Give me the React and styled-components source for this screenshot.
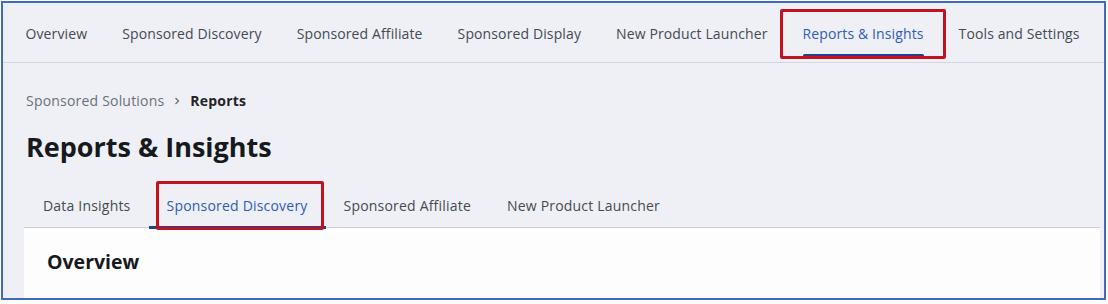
import React from "react";
import styled, { createGlobalStyle, css } from "styled-components";

const GlobalStyle = createGlobalStyle`
  html, body {
    margin: 0;
    padding: 0;
    background: #ffffff;
  }
  * {
    box-sizing: border-box;
  }
`;

const Frame = styled.div`
  margin: 1px 0 0 1px;
  width: 1105px;
  height: 299px;
  border: 2px solid #3f69bd;
  background: #eef0f5;
  font-family: "Open Sans", "Noto Sans", sans-serif;
  overflow: hidden;
  display: flex;
  flex-direction: column;
`;

const TopNav = styled.nav`
  height: 60px;
  flex: none;
  display: flex;
  align-items: stretch;
  gap: 35px;
  padding-left: 22.5px;
  border-bottom: 1px solid #d3d6dc;
`;

const highlight = css`
  &::after {
    content: "";
    position: absolute;
    border: 3px solid #c1121f;
    border-radius: 2px;
    pointer-events: none;
  }
`;

const NavItem = styled.a`
  position: relative;
  display: flex;
  align-items: center;
  padding-top: 1px;
  font-size: 14px;
  letter-spacing: 0.12px;
  color: ${p => (p.active ? "#2f5bb7" : "#454a52")};
  text-decoration: none;
  white-space: nowrap;

  ${p =>
    p.active &&
    css`
      &::before {
        content: "";
        position: absolute;
        left: 0;
        right: 0;
        bottom: 5px;
        height: 3px;
        border-radius: 2px;
        background: #263f8c;
      }
      ${highlight}
      &::after {
        left: -23px;
        right: -22px;
        top: 6px;
        bottom: 3px;
      }
    `}
`;

const Main = styled.div`
  flex: 1;
  display: flex;
  flex-direction: column;
  padding: 28px 4px 0 21px;
`;

const Breadcrumb = styled.div`
  display: flex;
  align-items: center;
  gap: 10px;
  padding-left: 2px;
  font-size: 14px;
  letter-spacing: 0.2px;
  line-height: 20px;
  color: #6a707a;
`;

const Current = styled.span`
  font-weight: 700;
  color: #1f2329;
`;

const Title = styled.h1`
  margin: 19px 0 0 2px;
  font-size: 27px;
  line-height: 34px;
  font-weight: 700;
  color: #16191d;
`;

const SubTabs = styled.div`
  margin-top: 20px;
  display: flex;
  padding-left: 1px;
  border-bottom: 1px solid #c9ccd2;
`;

const SubTab = styled.a`
  position: relative;
  height: 43px;
  padding: 0 18px;
  display: flex;
  align-items: center;
  font-size: 14px;
  letter-spacing: 0.2px;
  color: ${p => (p.active ? "#2f5bb7" : "#454a52")};
  text-decoration: none;
  white-space: nowrap;

  ${p =>
    p.active &&
    css`
      &::before {
        content: "";
        position: absolute;
        left: 0;
        right: 0;
        bottom: -2px;
        height: 3px;
        background: #263f8c;
      }
      ${highlight}
      &::after {
        left: 7px;
        right: 2px;
        top: -3px;
        bottom: -3px;
      }
    `}
`;

const Card = styled.section`
  flex: 1;
  background: #fdfdfe;
  padding: 21px 23px;
`;

const CardTitle = styled.h2`
  margin: 0;
  font-size: 19.5px;
  line-height: 26px;
  font-weight: 700;
  color: #16191d;
`;

const Chevron = () => (
  <svg width="6" height="8" viewBox="0 0 6 8">
    <path d="M1.5 1 L4.5 4 L1.5 7" fill="none" stroke="#6a707a" strokeWidth="1.3" />
  </svg>
);

const topItems = [
  "Overview",
  "Sponsored Discovery",
  "Sponsored Affiliate",
  "Sponsored Display",
  "New Product Launcher",
  "Reports & Insights",
  "Tools and Settings",
];

const subItems = ["Data Insights", "Sponsored Discovery", "Sponsored Affiliate", "New Product Launcher"];

export default function App() {
  return (
    <>
      <GlobalStyle />
      <Frame>
        <TopNav>
          {topItems.map(item => (
            <NavItem key={item} active={item === "Reports & Insights"}>
              {item}
            </NavItem>
          ))}
        </TopNav>
        <Main>
          <Breadcrumb>
            <span>Sponsored Solutions</span>
            <Chevron />
            <Current>Reports</Current>
          </Breadcrumb>
          <Title>Reports &amp; Insights</Title>
          <SubTabs>
            {subItems.map(item => (
              <SubTab key={item} active={item === "Sponsored Discovery"}>
                {item}
              </SubTab>
            ))}
          </SubTabs>
          <Card>
            <CardTitle>Overview</CardTitle>
          </Card>
        </Main>
      </Frame>
    </>
  );
}
